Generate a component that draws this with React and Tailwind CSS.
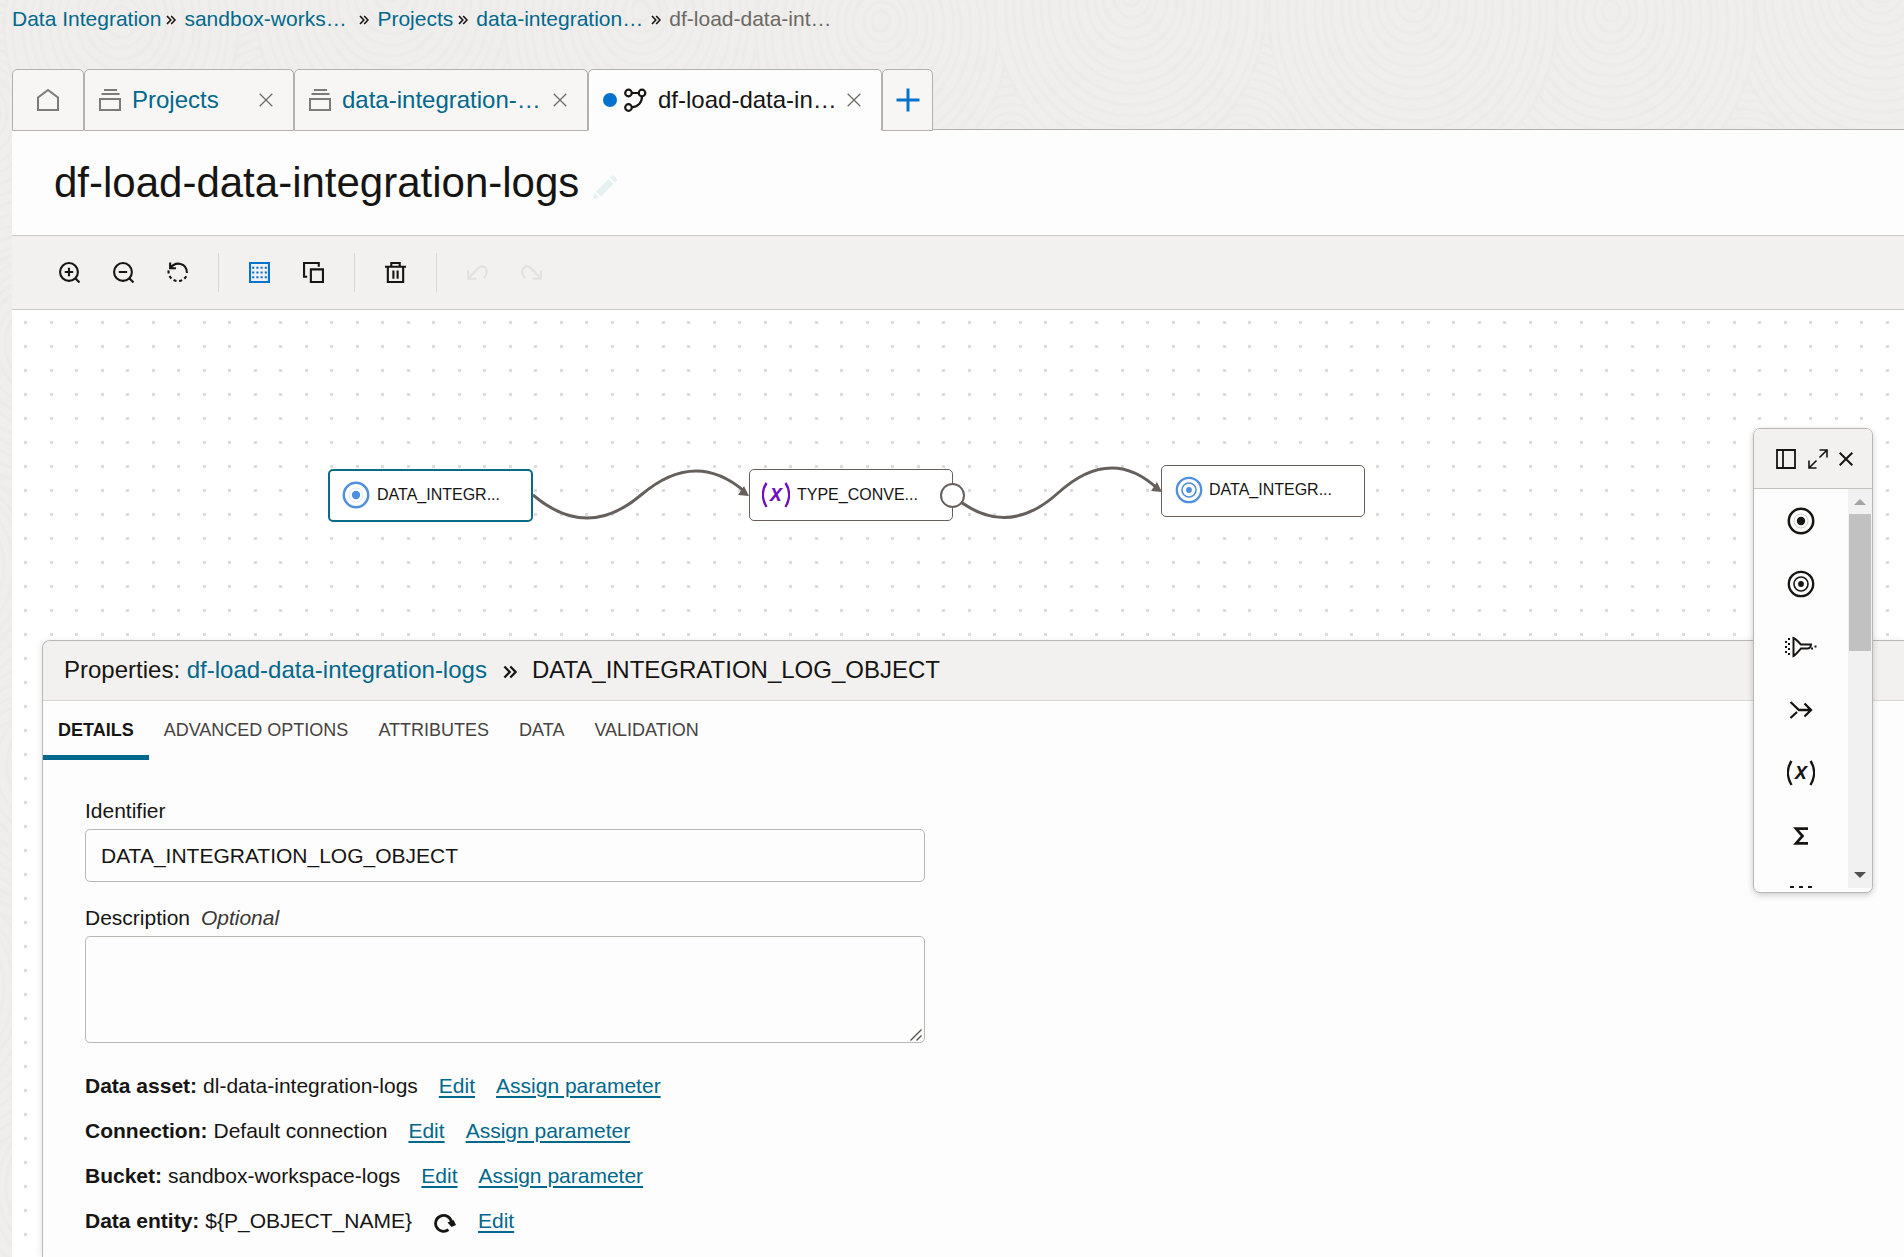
import React from "react";

const ringGroups = [
  { x: 60, y: 1180, r: 17 },
  { x: -60, y: 980, r: 16 },
  { x: 50, y: 760, r: 15 },
  { x: -50, y: 560, r: 16 },
  { x: 40, y: 340, r: 14 },
  { x: -20, y: 110, r: 13 },
  { x: 290, y: 150, r: 15 },
  { x: 780, y: 160, r: 14 },
  { x: 1010, y: 140, r: 14 },
  { x: 1740, y: 190, r: 15 },
  { x: 1240, y: 150, r: 12 },
  { x: 120, y: 15, r: 13 },
  { x: 390, y: -10, r: 15 },
  { x: 640, y: 10, r: 15 },
  { x: 880, y: 20, r: 14 },
  { x: 1130, y: -5, r: 15 },
  { x: 1880, y: -20, r: 17 },
  { x: 1610, y: 10, r: 16 },
  { x: 1412, y: 0, r: 16 },
];

function WoodGrain() {
  return (
    <svg className="pointer-events-none absolute inset-0 h-full w-full" aria-hidden="true">
      {ringGroups.map((g) => (
        <g key={`${g.x}-${g.y}`} stroke="#ecebe9" strokeWidth="3">
          {Array.from({ length: g.r }, (_, i) => g.r - i).map((n) => (
            <ellipse
              key={n}
              cx={g.x + (n % 3)}
              cy={g.y + n}
              rx={n * 9}
              ry={n * 10}
              fill="#efeeec"
              fillOpacity={n === g.r ? 1 : 0}
            />
          ))}
        </g>
      ))}
    </svg>
  );
}

function Chevrons({ className }) {
  return (
    <svg viewBox="0 0 10 10" className={className} fill="none" stroke="#161513" strokeWidth="1.6" aria-hidden="true">
      <path d="M1 1l3.800 4L1 9M5.200 1L9 5 5.200 9" />
    </svg>
  );
}

function Crumbs() {
  const sep = <Chevrons className="mt-[2px] mr-2 ml-[5px] h-[10px] w-[10px] shrink-0" />;
  return (
    <nav aria-label="Breadcrumb" className="flex h-[38px] items-center text-[21px] leading-7 whitespace-nowrap text-[#00688c]">
      <a href="#data-integration">Data Integration</a>
      {sep}
      <a href="#workspace" className="min-w-[170px]">sandbox-works…</a>
      {sep}
      <a href="#projects">Projects</a>
      {sep}
      <a href="#project" className="min-w-[170px]">data-integration…</a>
      {sep}
      <span className="text-[#6b6863]">df-load-data-int…</span>
    </nav>
  );
}

function ProjectIcon() {
  return (
    <svg viewBox="0 0 22 22" className="h-[22px] w-[22px] shrink-0" fill="none" stroke="#7d7b78" strokeWidth="2" aria-hidden="true">
      <path d="M5 1h13M2.500 5h18M1 10h20v11H1z" />
    </svg>
  );
}

function CloseIcon() {
  return (
    <svg viewBox="0 0 14 14" className="h-[14px] w-[14px]" fill="none" stroke="#6f6d6a" strokeWidth="1.3" aria-hidden="true">
      <path d="M.7.700l12.600 12.600M13.300.7L.7 13.300" />
    </svg>
  );
}

const tabBase = "flex h-[62px] shrink-0 items-center rounded-t-[5px] border border-[#b3b1ae]";

function FileTabs() {
  return (
    <div className="-mb-[2px] flex text-2xl whitespace-nowrap">
      <div className={`${tabBase} w-[72px] justify-center bg-[#f7f6f4]`}>
        <button aria-label="Home">
          <svg viewBox="0 0 24 24" className="h-6 w-6" fill="none" stroke="#7d7b78" strokeWidth="2" aria-hidden="true">
            <path d="M2 9.500L12 2l10 7.500V22H2z" />
          </svg>
        </button>
      </div>
      <div className={`${tabBase} w-[210px] bg-[#f7f6f4] pr-5 pl-[14px]`}>
        <ProjectIcon />
        <a href="#projects-tab" className="ml-[11px] flex-1 text-[#00688c]">Projects</a>
        <button aria-label="Close Projects"><CloseIcon /></button>
      </div>
      <div className={`${tabBase} w-[294px] bg-[#f7f6f4] pr-5 pl-[14px]`}>
        <ProjectIcon />
        <a href="#project-tab" className="ml-[11px] flex-1 text-[#00688c]">data-integration-…</a>
        <button aria-label="Close project"><CloseIcon /></button>
      </div>
      <div className={`${tabBase} w-[294px] border-b-[#fdfdfd] bg-[#fdfdfd] pr-5 pl-[14px]`}>
        <span className="h-[14px] w-[14px] shrink-0 rounded-full bg-[#0572ce]" />
        <svg viewBox="0 0 24 24" className="ml-[6px] h-6 w-6 shrink-0" fill="none" stroke="#161513" strokeWidth="2.200" aria-hidden="true">
          <circle cx="5.500" cy="5" r="3.300" />
          <circle cx="19" cy="5" r="3.300" />
          <circle cx="5.500" cy="19.500" r="3.300" />
          <path d="M8.800 5h7M19 8.300c0 6-3.500 10.500-10.300 11" />
        </svg>
        <a href="#dataflow-tab" className="ml-[11px] flex-1 text-[#161513]">df-load-data-in…</a>
        <button aria-label="Close data flow"><CloseIcon /></button>
      </div>
      <div className={`${tabBase} w-[51px] justify-center bg-[#f7f6f4]`}>
        <button aria-label="Open tab">
          <svg viewBox="0 0 24 24" className="h-6 w-6" fill="none" stroke="#0572ce" strokeWidth="3" aria-hidden="true">
            <path d="M12 .5v23M.5 12h23" />
          </svg>
        </button>
      </div>
    </div>
  );
}

function Tool({ label, color = "#161513", disabled = false, children }) {
  return (
    <button aria-label={label} disabled={disabled}>
      <svg viewBox="0 0 20 20" className="h-[21px] w-[21px]" fill="none" stroke={color} strokeWidth="2" aria-hidden="true">
        {children}
      </svg>
    </button>
  );
}

function Divider() {
  return <span className="mx-[30px] h-[39px] w-px bg-[#d3d8dc]" />;
}

function Toolbar() {
  return (
    <div role="toolbar" aria-label="Canvas tools" className="flex h-[75px] items-center border-y border-[#cccac8] bg-[#f2f1ef] pb-px pl-[47px]">
      <div className="flex gap-[33px]">
        <Tool label="Zoom in">
          <circle cx="9.500" cy="9.500" r="8.500" />
          <path d="M15.500 15.500l4 4M9.500 5.500v8M5.500 9.500h8" />
        </Tool>
        <Tool label="Zoom out">
          <circle cx="9.500" cy="9.500" r="8.500" />
          <path d="M15.500 15.500l4 4M5.500 9.500h8" />
        </Tool>
        <Tool label="Reset zoom">
          <path d="M3 .5v5.500h5.500M3.500 5.500C8-1 19 .5 19 10.500" />
          <path d="M18.300 13.500A9 9 0 0 1 1.500 8" strokeDasharray="3 2.400" />
        </Tool>
      </div>
      <Divider />
      <div className="flex gap-[33px]">
        <Tool label="Toggle grid" color="#0572ce">
          <path d="M1 1h18v18H1z" />
          <path d="M3 5.500h14M3 10h14M3 14.500h14" strokeDasharray="2 2" />
        </Tool>
        <Tool label="Duplicate">
          <path d="M7.500 7h11.500v12H7.500z" />
          <path d="M4 14H1V1h14v3.500" />
        </Tool>
      </div>
      <Divider />
      <Tool label="Delete">
        <path d="M0 4.500h20M2.700 4.500V19h14.600V4.500M6 4V1h8v3M8 8v8M12 8v8" />
      </Tool>
      <Divider />
      <div className="flex gap-[33px]">
        <Tool label="Undo" color="#e2e1df" disabled>
          <path d="M1 8v8h8M1.500 15.500L10 6.500c3-3.500 6-2.500 7.500-1 2 2.500 2 6-1.500 10" />
        </Tool>
        <Tool label="Redo" color="#e2e1df" disabled>
          <path d="M19 8v8h-8M18.500 15.500L10 6.500c-3-3.500-6-2.500-7.500-1-2 2.500-2 6 1.500 10" />
        </Tool>
      </div>
    </div>
  );
}

function SourceIcon({ color }) {
  return (
    <svg viewBox="0 0 28 28" className="h-7 w-7 shrink-0" fill="none" stroke={color} aria-hidden="true">
      <circle cx="14" cy="14" r="12.200" strokeWidth="2.500" />
      <circle cx="14" cy="14" r="7" strokeWidth="1" opacity=".2" />
      <circle cx="14" cy="14" r="4.200" fill={color} stroke="none" />
    </svg>
  );
}

function TargetIcon({ color }) {
  return (
    <svg viewBox="0 0 28 28" className="h-7 w-7 shrink-0" fill="none" stroke={color} aria-hidden="true">
      <circle cx="14" cy="14" r="12.200" strokeWidth="2.300" />
      <circle cx="14" cy="14" r="7" strokeWidth="1.600" />
      <circle cx="14" cy="14" r="2.900" fill={color} stroke="none" />
    </svg>
  );
}

function ExpressionIcon({ color }) {
  return (
    <svg viewBox="0 -6 28 40" className="h-10 w-7 shrink-0" fill="none" stroke={color} strokeWidth="2.400" aria-hidden="true">
      <path d="M4.500 2C-.2 9-.2 18 4.500 26M23.500 2c4.700 7 4.700 16 0 24" />
      <text x="14" y="20" textAnchor="middle" fontSize="24" fill={color} stroke="none" className="font-['Open_Sans',sans-serif] font-semibold italic">x</text>
    </svg>
  );
}

const nodeBase = "absolute flex items-center bg-white text-base text-[#161513] whitespace-nowrap rounded-[5px]";

function Diagram() {
  return (
    <div className="relative h-[330px]">
      <svg className="absolute inset-0 h-full w-full" fill="none" stroke="#66605c" strokeWidth="3" aria-hidden="true">
        <path d="M521 185Q575 231 629 185T732 181" />
        <path d="M940 185Q993 231 1046 183T1146 179" />
        <path d="M737 186l-11-1 6-9zM1150 182l-11-1 6-9z" fill="#66605c" stroke="none" />
      </svg>
      <button className={`${nodeBase} top-[159px] left-[316px] h-[53px] w-[205px] border-2 border-[#0b6a88] pb-[2px] pl-3`}>
        <SourceIcon color="#4f8fdb" />
        <span className="ml-[7px]">DATA_INTEGR...</span>
      </button>
      <button className={`${nodeBase} top-[159px] left-[737px] h-[52px] w-[204px] border border-[#66605c] pl-3`}>
        <ExpressionIcon color="#6f0fbe" />
        <span className="ml-[7px]">TYPE_CONVE...</span>
      </button>
      <span className="absolute top-[173px] left-[928px] h-[25px] w-[25px] rounded-full border-2 border-[#66605c] bg-white" />
      <button className={`${nodeBase} top-[155px] left-[1149px] h-[52px] w-[204px] border border-[#66605c] pb-[2px] pl-[13px]`}>
        <TargetIcon color="#4f8fdb" />
        <span className="ml-[6px]">DATA_INTEGR...</span>
      </button>
    </div>
  );
}

const sectionTabs = ["ADVANCED OPTIONS", "ATTRIBUTES", "DATA", "VALIDATION"];
const linkStyle = "ml-[21px] text-[#00688c] underline underline-offset-[3px]";

function PropertyRow({ label, value, assign, refresh }) {
  return (
    <div className="flex h-[45px] items-center whitespace-nowrap">
      <dt className="font-bold">{label}</dt>
      <dd className="ml-[6px] flex items-center">
        {value}
        {refresh && (
          <button aria-label="Refresh data entity" className="mt-1 ml-[21px]">
            <svg viewBox="0 0 24 20" className="h-5 w-6" fill="none" stroke="#161513" strokeWidth="2.800" aria-hidden="true">
              <path d="M15.500 16.700A8 8 0 1 1 18.500 9" />
              <path d="M14.500 9.500l6-2.500 2.500 5-4.500 2z" fill="#161513" stroke="none" />
            </svg>
          </button>
        )}
        <a href="#edit" className={linkStyle}>Edit</a>
        {assign && <a href="#assign" className={linkStyle}>Assign parameter</a>}
      </dd>
    </div>
  );
}

function Properties() {
  return (
    <section className="ml-[30px] flex-1 rounded-tl-[8px] border-t border-l border-[#bab8b5] bg-[#fdfdfd] shadow-[-2px_0_6px_rgba(0,0,0,0.08)]">
      <header className="flex h-[60px] items-center rounded-tl-[7px] border-b border-[#d9d7d5] bg-[#f2f1ef] pb-[2px] pl-[21px] text-2xl whitespace-nowrap">
        <h2>
          Properties: <a href="#dataflow" className="text-[#00688c]">df-load-data-integration-logs</a>
        </h2>
        <Chevrons className="mt-1 mr-[15px] ml-4 h-[14px] w-[14px]" />
        <span>DATA_INTEGRATION_LOG_OBJECT</span>
      </header>
      <div role="tablist" className="flex text-lg leading-[49px] whitespace-nowrap text-[#45423f]">
        <button role="tab" aria-selected="true" className="border-b-[5px] border-[#00688c] px-[15px] pt-[5px] font-bold text-[#161513]">DETAILS</button>
        {sectionTabs.map((t) => (
          <button key={t} role="tab" aria-selected="false" className="border-b-[5px] border-transparent px-[15px] pt-[5px]">{t}</button>
        ))}
      </div>
      <form className="px-[42px] pt-[37px] text-[21px] leading-7">
        <label htmlFor="identifier" className="mb-1 block">Identifier</label>
        <input id="identifier" defaultValue="DATA_INTEGRATION_LOG_OBJECT" className="block h-[53px] w-full max-w-[840px] rounded-[5px] border border-[#bab8b5] bg-[#fdfdfd] px-[15px]" />
        <label htmlFor="description" className="mt-[22px] mb-1 block">
          Description <span className="ml-[5px] text-[#3a3734] italic">Optional</span>
        </label>
        <div className="relative max-w-[840px]">
          <textarea id="description" className="block h-[107px] w-full resize-none rounded-[5px] border border-[#bab8b5] bg-[#fdfdfd] px-[15px] py-2" />
          <svg viewBox="0 0 12 12" className="pointer-events-none absolute right-[3px] bottom-[2px] h-3 w-3" stroke="#55524f" strokeWidth="1.400" aria-hidden="true">
            <path d="M.5 11.500l11-11M6.500 11.500l5-5" />
          </svg>
        </div>
        <dl className="mt-5">
          <PropertyRow label="Data asset:" value="dl-data-integration-logs" assign />
          <PropertyRow label="Connection:" value="Default connection" assign />
          <PropertyRow label="Bucket:" value="sandbox-workspace-logs" assign />
          <PropertyRow label="Data entity:" value="${P_OBJECT_NAME}" refresh />
        </dl>
      </form>
    </section>
  );
}

function Operators() {
  const ink = "#161513";
  const cell = "flex h-[63px] w-full shrink-0 items-center justify-center";
  return (
    <aside aria-label="Operators" className="absolute top-[118px] right-[31px] flex h-[465px] w-[120px] flex-col rounded-[7px] border border-[#bab8b5] bg-[#fdfdfd] shadow-[0_2px_6px_rgba(0,0,0,0.2)]">
      <header className="flex h-[60px] shrink-0 items-center rounded-t-[6px] border-b border-[#c4c2bf] bg-[#f2f1ef] pl-[22px]">
        <button aria-label="Dock panel">
          <svg viewBox="0 0 20 20" className="h-5 w-5" fill="none" stroke={ink} strokeWidth="1.800" aria-hidden="true">
            <path d="M1 1h18v18H1zM7 1v18" />
          </svg>
        </button>
        <button aria-label="Expand panel" className="ml-3">
          <svg viewBox="0 0 20 20" className="h-5 w-5" fill="none" stroke={ink} strokeWidth="1.600" aria-hidden="true">
            <path d="M11.500 1H19v7.500M19 1l-7.500 7.500M8.500 19H1v-7.500M1 19l7.500-7.500" />
          </svg>
        </button>
        <button aria-label="Close panel" className="ml-[11px]">
          <svg viewBox="0 0 14 14" className="h-[14px] w-[14px]" fill="none" stroke={ink} strokeWidth="2" aria-hidden="true">
            <path d="M.7.700l12.600 12.600M13.300.7L.7 13.300" />
          </svg>
        </button>
      </header>
      <div className="mb-1 flex min-h-0 flex-1">
        <div className="flex flex-1 flex-col overflow-hidden">
          <button aria-label="Source" className={cell}><SourceIcon color={ink} /></button>
          <button aria-label="Target" className={cell}><TargetIcon color={ink} /></button>
          <button aria-label="Filter" className={cell}>
            <svg viewBox="0 0 32 22" className="h-[22px] w-8" fill="none" stroke={ink} strokeWidth="2" aria-hidden="true">
              <path d="M8.500 2v18c3-1.500 5-5 7.500-7.500h6.500c2 0 3.500-2 3.500-4H16C13.500 6 11 3 8.500 2z" />
              <path d="M4 2v2M4 7v2M4 12v2M4 17v2M1 5v2M1 10v2M1 15v2M26 12.500h2M29.500 10.500h2" />
            </svg>
          </button>
          <button aria-label="Joiner" className={cell}>
            <svg viewBox="0 0 24 20" className="h-5 w-6" fill="none" stroke={ink} strokeWidth="2.300" aria-hidden="true">
              <path d="M1.500 2L10 10h12M1.500 18L8 12M15.500 3.500L22 10l-6.500 6.500" />
            </svg>
          </button>
          <button aria-label="Expression" className={cell}><ExpressionIcon color={ink} /></button>
          <button aria-label="Aggregate" className={cell}>
            <svg viewBox="0 0 16 18" className="h-[18px] w-4" fill="none" stroke={ink} strokeWidth="2.700" aria-hidden="true">
              <path d="M15 1.700H3L9.500 9 3 16.300h12" />
            </svg>
          </button>
          <button aria-label="Distinct" className="flex shrink-0 justify-center pt-[19px]">
            <svg viewBox="0 0 24 24" className="h-6 w-6" fill="none" stroke={ink} strokeWidth="2" aria-hidden="true">
              <path d="M1 1h22v22H1z" strokeDasharray="4 5" />
            </svg>
          </button>
        </div>
        <div className="flex w-6 flex-col items-center bg-[#f1f1f1]">
          <svg viewBox="0 0 12 25" className="h-[25px] w-3" aria-hidden="true">
            <path d="M0 16l6-6 6 6z" fill="#a3a3a3" />
          </svg>
          <div className="h-[137px] w-[22px] bg-[#c1c1c1]" />
          <svg viewBox="0 0 12 25" className="mt-auto h-[25px] w-3" aria-hidden="true">
            <path d="M0 9l6 6 6-6z" fill="#505050" />
          </svg>
        </div>
      </div>
    </aside>
  );
}

export default function App() {
  return (
    <div className="relative min-h-screen overflow-hidden bg-[#efeeec] pl-3 font-['Liberation_Sans',Arial,sans-serif] text-[#161513]">
      <WoodGrain />
      <div className="relative flex min-h-screen flex-col">
        <div className="relative z-10 flex flex-col gap-[31px]">
          <Crumbs />
          <FileTabs />
        </div>
        <main className="flex flex-1 flex-col border-t border-[#b3b1ae] bg-[#fdfdfd]">
          <div className="flex h-[105px] items-center gap-[14px] pl-[42px]">
            <h1 className="text-[42px] leading-[48px] whitespace-nowrap">df-load-data-integration-logs</h1>
            <button aria-label="Edit name">
              <svg viewBox="0 0 24 24" className="mt-2 h-6 w-6" fill="#e6f1f2" aria-hidden="true">
                <path d="M0 24l1.500-6 4.500 4.500zM3 16.500L15.500 4l5 5L8 21.500zM17 2.500L19 .5c.5-.5 1-.5 1.500 0L24 4c.3.500.3 1 0 1.500l-2 2z" />
              </svg>
            </button>
          </div>
          <Toolbar />
          <div className="relative flex flex-1 flex-col bg-white">
            <svg className="absolute inset-0 h-full w-full" aria-hidden="true">
              <defs>
                <pattern id="dots" width="51" height="24" patternUnits="userSpaceOnUse">
                  <rect x="12" y="11" width="3" height="3" fill="#dcdcdc" />
                  <rect x="38" y="11" width="3" height="3" fill="#dcdcdc" />
                </pattern>
              </defs>
              <rect width="100%" height="100%" fill="url(#dots)" />
            </svg>
            <Diagram />
            <div className="relative flex flex-1 flex-col">
              <Properties />
            </div>
            <Operators />
          </div>
        </main>
      </div>
    </div>
  );
}
